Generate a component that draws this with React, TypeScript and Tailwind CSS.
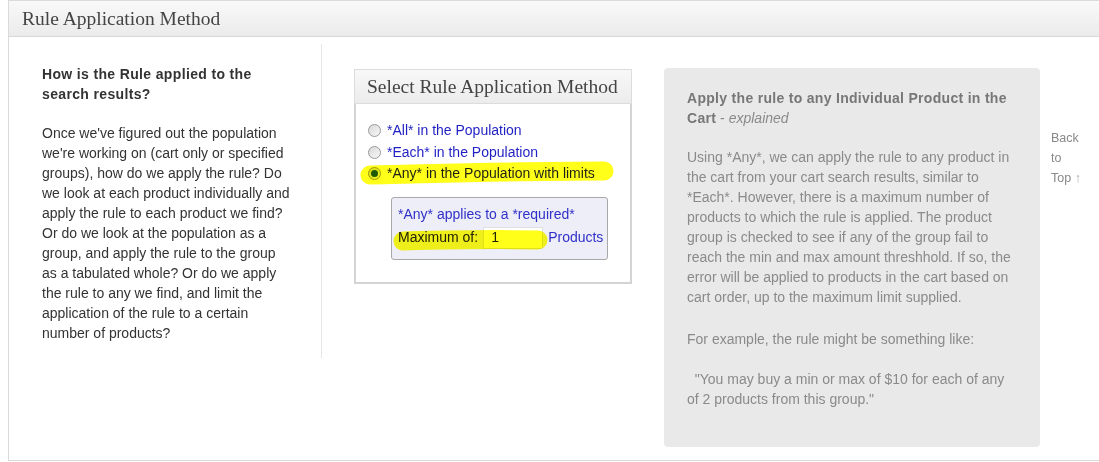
import React from "react";

const sans = "font-['Liberation_Sans',Arial,sans-serif]";
const serif = "font-['Liberation_Serif','Times_New_Roman',serif]";

function Radio({ checked }: { checked?: boolean }) {
  return (
    <span className="relative inline-flex h-[13px] w-[13px] shrink-0 items-center justify-center rounded-full border border-[#9a9a9a] bg-gradient-to-br from-[#d8d8d8] to-[#f8f8f8]">
      {checked && <span className="h-[7px] w-[7px] rounded-full bg-[#1d5a1d]" />}
    </span>
  );
}

export default function App() {
  return (
    <div className={`h-[462px] w-[1099px] overflow-hidden bg-white ${sans}`}>
      <div className="ml-2 h-[461px] w-[1100px] border-b border-l border-t border-[#dadada]">
        <div className="flex h-[36px] items-center border-b border-[#d8d8d8] bg-gradient-to-b from-[#f9f9f9] to-[#ebebeb] pl-[13px]">
          <span className={`${serif} text-[19.5px] text-[#444]`}>Rule Application Method</span>
        </div>
        <div className="flex items-start">
          {/* left column */}
          <div className="mt-[7px] h-[314px] w-[313px] shrink-0 border-r border-[#e6e6e6] pl-[33px] pt-[20px] text-[14px] leading-[20px] text-[#333]">
            <div className="font-bold tracking-[0.35px]">
              How is the Rule applied to the
              <br />
              search results?
            </div>
            <div className="mt-[19px]">
              Once we've figured out the population
              <br />
              we're working on (cart only or specified
              <br />
              groups), how do we apply the rule? Do
              <br />
              we look at each product individually and
              <br />
              apply the rule to each product we find?
              <br />
              Or do we look at the population as a
              <br />
              group, and apply the rule to the group
              <br />
              as a tabulated whole? Or do we apply
              <br />
              the rule to any we find, and limit the
              <br />
              application of the rule to a certain
              <br />
              number of products?
            </div>
          </div>

          {/* middle column */}
          <div className="relative ml-[32px] mt-[32px] w-[278px] shrink-0">
            <div className="flex h-[35px] items-center border border-[#dcdcdc] bg-gradient-to-b from-[#f8f8f8] to-[#ececec] pl-[12px]">
              <span className={`${serif} text-[19.5px] text-[#444]`}>Select Rule Application Method</span>
            </div>
            <div className="h-[180px] border-2 border-t-0 border-[#d4d4d4] pl-3 pt-[16px] text-[14px] text-[#1f1fc4]">
              <div className="flex h-[21.5px] items-center gap-[6px]">
                <Radio />
                <span>*All* in the Population</span>
              </div>
              <div className="flex h-[21.5px] items-center gap-[6px]">
                <Radio />
                <span>*Each* in the Population</span>
              </div>
              <div className="flex h-[21.5px] items-center gap-[6px]">
                <Radio checked />
                <span>*Any* in the Population with limits</span>
              </div>
              <div className="ml-[23px] mt-[12px] h-[63px] w-[217px] rounded-[3px] border border-[#a8a8a8] bg-[#eeeef8] pl-[6px] pt-[6px]">
                <div className="leading-[20px] text-[#3030c8]">*Any* applies to a *required*</div>
                <div className="mt-[3px] flex items-center">
                  <span className="text-[#222]">Maximum of:</span>
                  <span className="ml-[5px] flex h-[22px] w-[60px] items-center border border-[#e0e0e0] bg-white pl-[7px] text-[#222]">
                    1
                  </span>
                  <span className="ml-[5px] text-[#3030c8]">Products</span>
                </div>
              </div>
            </div>
            <svg
              className="pointer-events-none absolute left-0 top-0 mix-blend-multiply"
              width="278"
              height="215"
              viewBox="0 0 278 215"
            >
              <path
                d="M16 106 C 70 105, 160 102, 250 102"
                stroke="#ffff1a"
                strokeWidth="19"
                strokeLinecap="round"
                fill="none"
              />
              <path
                d="M49 172 C 90 171, 140 170, 184 171"
                stroke="#ffff1a"
                strokeWidth="19"
                strokeLinecap="round"
                fill="none"
              />
            </svg>
          </div>

          {/* gray explanation panel */}
          <div className="ml-[32px] mt-[31px] h-[379px] w-[376px] shrink-0 rounded-[4px] bg-[#e9e9e9] px-[23px] pt-[20px] text-[14px] leading-[20px] text-[#8a8a8a]">
            <div>
              <span className="font-bold tracking-[0.3px] text-[#777]">
                Apply the rule to any Individual Product in the
                <br />
                Cart
              </span>{" "}
              - <span className="italic">explained</span>
            </div>
            <div className="mt-[19px]">
              Using *Any*, we can apply the rule to any product in
              <br />
              the cart from your cart search results, similar to
              <br />
              *Each*. However, there is a maximum number of
              <br />
              products to which the rule is applied. The product
              <br />
              group is checked to see if any of the group fail to
              <br />
              reach the min and max amount threshhold. If so, the
              <br />
              error will be applied to products in the cart based on
              <br />
              cart order, up to the maximum limit supplied.
            </div>
            <div className="mt-[22px]">For example, the rule might be something like:</div>
            <div className="mt-[20px]">
              &nbsp;&nbsp;"You may buy a min or max of $10 for each of any
              <br />
              of 2 products from this group."
            </div>
          </div>

          {/* back to top */}
          <div className="ml-[11px] mt-[91px] text-[12.5px] leading-[20px] text-[#888]">
            Back
            <br />
            to
            <br />
            Top <span className="text-[#aaa]">↑</span>
          </div>
        </div>
      </div>
    </div>
  );
}
